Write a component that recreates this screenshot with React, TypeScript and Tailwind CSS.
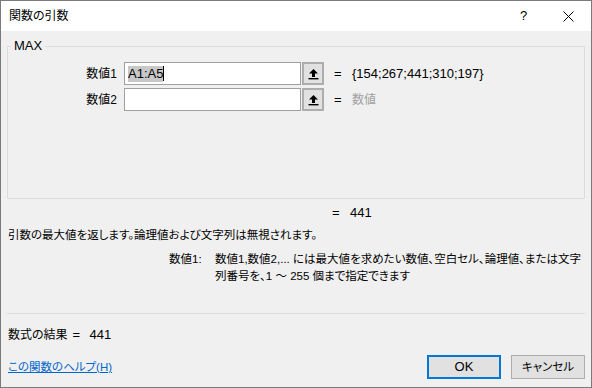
import React from "react";

const UploadButton: React.FC = () => (
  <div className="w-[22px] h-[23px] ml-px border-2 border-[#adadad] bg-[#e1e1e1] flex items-center justify-center shrink-0">
    <svg width="11" height="12" viewBox="0 0 11 12">
      <path d="M5.5 1 L10 5.5 L7 5.5 L7 9 L4 9 L4 5.5 L1 5.5 Z" fill="#000" />
      <rect x="0.5" y="10" width="10" height="1.4" fill="#000" />
    </svg>
  </div>
);

interface ArgRow {
  label: string;
  value: string;
  selected: boolean;
  result: string;
  placeholder: boolean;
}

const rows: ArgRow[] = [
  { label: "数値1", value: "A1:A5", selected: true, result: "{154;267;441;310;197}", placeholder: false },
  { label: "数値2", value: "", selected: false, result: "数値", placeholder: true },
];

const App: React.FC = () => {
  return (
    <div className="w-[592px] h-[388px] border border-[#7a7a7a] bg-[#f0f0f0] text-[11.5px] leading-[16px] text-black whitespace-nowrap [font-family:'Liberation_Sans','Noto_Sans_CJK_JP',sans-serif] [font-feature-settings:'palt'] flex flex-col overflow-hidden">
      {/* title bar */}
      <div className="h-[30px] bg-white flex items-center shrink-0">
        <div className="flex-1 pl-[8px] text-[12px]">関数の引数</div>
        <div className="w-[45px] text-center text-[13px]">?</div>
        <div className="w-[45px] flex justify-center">
          <svg width="11" height="11" viewBox="0 0 11 11">
            <path d="M0.5 0.5 L10.5 10.5 M10.5 0.5 L0.5 10.5" stroke="#000" strokeWidth="1" />
          </svg>
        </div>
      </div>

      <div className="flex flex-col px-[6px]">
        <fieldset className="mt-[7px] h-[161px] border border-[#dcdcdc] flex flex-col">
          <legend className="ml-[3px] px-[3px] text-[13px]">MAX</legend>
          <div className="mt-[8px] flex flex-col gap-[3px]">
            {rows.map((r) => (
              <div key={r.label} className="flex items-center h-[23px]">
                <div className="w-[109px] text-right text-[12px]">{r.label}</div>
                <div className="ml-[7px] w-[177px] h-[23px] bg-white border border-[#a0a0a0] flex items-center pl-[3px] text-[13px]">
                  {r.selected && (
                    <>
                      <span className="bg-[#c8c8c8]">{r.value}</span>
                      <span className="w-px h-[15px] bg-black" />
                    </>
                  )}
                </div>
                <UploadButton />
                <div className="ml-[10px] w-[18px] text-[13px]">=</div>
                <div className={r.placeholder ? "text-[#a0a0a0] text-[12px]" : "text-[13px]"}>{r.result}</div>
              </div>
            ))}
          </div>
        </fieldset>

        <div className="mt-[6px] pl-[325px] flex text-[13px]">
          <span className="w-[18px]">=</span>
          <span>441</span>
        </div>

        <div className="mt-[6px] pl-px">引数の最大値を返します。論理値および文字列は無視されます。</div>

        <div className="mt-[8px] pl-[162px] flex leading-[17px]">
          <div className="w-[46px]">数値1:</div>
          <div>
            数値1,数値2,... には最大値を求めたい数値、空白セル、論理値、または文字
            <br />
            列番号を、1 ～ 255 個まで指定できます
          </div>
        </div>

        <div className="mt-[28px] h-px bg-[#dcdcdc]" />

        <div className="mt-[13px] pl-px flex items-center">
          <span className="text-[12px]">数式の結果</span>
          <span className="ml-[5px] w-[17px] text-[13px]">=</span>
          <span className="text-[13px]">441</span>
        </div>

        <div className="mt-[12px] flex items-center">
          <a className="pl-px text-[#0066cc] underline">この関数のヘルプ(H)</a>
          <div className="ml-auto flex gap-[10px]">
            <button className="w-[74px] h-[24px] border-2 border-[#0078d7] bg-[#e1e1e1] text-[13px]">OK</button>
            <button className="w-[74px] h-[24px] border border-[#adadad] bg-[#e1e1e1]">キャンセル</button>
          </div>
        </div>
      </div>
    </div>
  );
};

export default App;
